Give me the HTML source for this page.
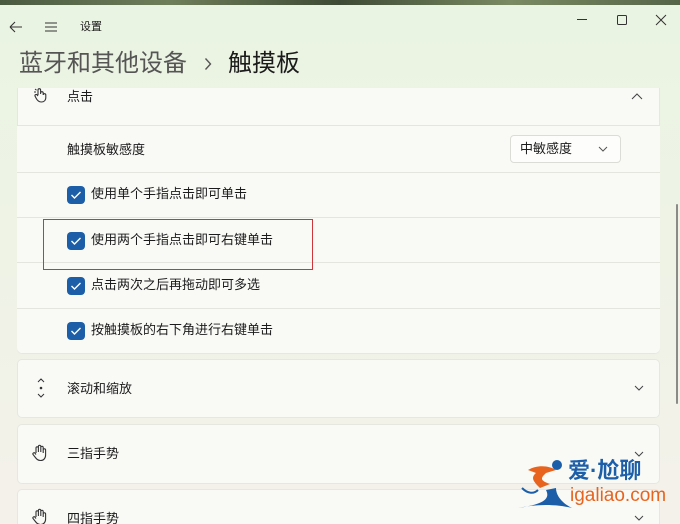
<!DOCTYPE html>
<html><head><meta charset="utf-8"><style>
*{margin:0;padding:0;box-sizing:border-box}
html,body{width:680px;height:524px;overflow:hidden}
body{position:relative;font-family:"Liberation Sans","Noto Sans CJK SC",sans-serif;background:linear-gradient(180deg,#eaf4e2 0%,#eef3e6 45%,#f4f1ea 100%);color:#1b1b1b}
.top{position:absolute;left:0;top:0;width:680px;height:5px;background:linear-gradient(90deg,#4a5a40,#6f7e5a,#3e4a35,#7a8a62,#556448)}
.abs{position:absolute}
.t{font-size:13px;white-space:nowrap;line-height:16px}
.card{position:absolute;left:17px;width:643px;background:#f9faf6;border:1px solid #e6e8e0;border-radius:5px}
.row{position:absolute;left:17px;width:643px;border-top:1px solid #e4e6de;background:#f9faf6}
.cb{position:absolute;width:18px;height:18px;border-radius:4px;background:#1c5fa8}
.cb svg{position:absolute;left:3px;top:4px}
.chev{position:absolute}
</style></head><body>
<div class="top"></div>
<svg class="abs" style="left:9px;top:21px" width="14" height="12"><path d="M1 6H13M1 6L6 1M1 6L6 11" stroke="#333" fill="none" stroke-width="1.1"/></svg>
<svg class="abs" style="left:44px;top:21px" width="14" height="12"><path d="M1 2H13M1 6H13M1 10H13" stroke="#333" stroke-width="1.1"/></svg>
<div class="abs t" style="left:80px;top:19px;font-size:11px">设置</div>
<svg class="abs" style="left:576px;top:18px" width="12" height="4"><path d="M1 1.5H11" stroke="#333"/></svg>
<svg class="abs" style="left:616px;top:14px" width="12" height="12"><rect x="1.5" y="1.5" width="9" height="9" rx="1" stroke="#333" fill="none"/></svg>
<svg class="abs" style="left:655px;top:14px" width="12" height="12"><path d="M1 1L11 11M11 1L1 11" stroke="#333"/></svg>
<div class="abs" style="left:19px;top:50px;font-size:24px;line-height:28px;color:#555;white-space:nowrap">蓝牙和其他设备</div>
<svg class="abs" style="left:204px;top:57px" width="8" height="14"><path d="M1.5 1.5L6.5 7L1.5 12.5" stroke="#555" fill="none" stroke-width="1.4"/></svg>
<div class="abs" style="left:228px;top:50px;font-size:24px;line-height:28px;color:#1b1b1b;white-space:nowrap">触摸板</div>

<div class="card" style="top:88px;height:266px;border-radius:0 0 5px 5px;border-top:none"></div>
<svg class="abs" style="left:33px;top:87px" width="16" height="16"><path d="M5 8V3a1.3 1.3 0 0 1 2.6 0V7M7.6 7V6a1.3 1.3 0 0 1 2.6 0V8M10.2 8a1.3 1.3 0 0 1 2.6 0v2.5c0 3-2 4.5-4.5 4.5S4 13 3 11L2 9a1.2 1.2 0 0 1 2-1.2L5 9" stroke="#333" fill="none" stroke-width="1.1"/><path d="M2 2L3.5 3.2M1 5H3" stroke="#333"/></svg>
<div class="abs t" style="left:67px;top:89px">点击</div>
<svg class="chev" style="left:631px;top:93px" width="12" height="8"><path d="M1 6L6 1L11 6" stroke="#444" fill="none"/></svg>

<div class="row" style="top:125px;height:47px"></div>
<div class="abs t" style="left:67px;top:142px">触摸板敏感度</div>
<div class="abs" style="left:510px;top:135px;width:111px;height:28px;background:#fdfdfb;border:1px solid #dcdcd6;border-radius:4px"></div>
<div class="abs t" style="left:520px;top:141px">中敏感度</div>
<svg class="chev" style="left:598px;top:146px" width="10" height="7"><path d="M1 1L5 5L9 1" stroke="#555" fill="none"/></svg>

<div class="row" style="top:172px;height:45px"></div>
<div class="row" style="top:217px;height:45px"></div>
<div class="row" style="top:262px;height:46px"></div>
<div class="row" style="top:308px;height:45px;border-radius:0 0 5px 5px"></div>

<div class="cb" style="left:67px;top:186px"><svg width="12" height="10"><path d="M1.5 5L4.5 8L10.5 2" stroke="#fff" fill="none" stroke-width="1.4"/></svg></div>
<div class="abs t" style="left:91px;top:186px">使用单个手指点击即可单击</div>
<div class="cb" style="left:67px;top:232px"><svg width="12" height="10"><path d="M1.5 5L4.5 8L10.5 2" stroke="#fff" fill="none" stroke-width="1.4"/></svg></div>
<div class="abs t" style="left:91px;top:232px">使用两个手指点击即可右键单击</div>
<div class="cb" style="left:67px;top:277px"><svg width="12" height="10"><path d="M1.5 5L4.5 8L10.5 2" stroke="#fff" fill="none" stroke-width="1.4"/></svg></div>
<div class="abs t" style="left:91px;top:277px">点击两次之后再拖动即可多选</div>
<div class="cb" style="left:67px;top:322px"><svg width="12" height="10"><path d="M1.5 5L4.5 8L10.5 2" stroke="#fff" fill="none" stroke-width="1.4"/></svg></div>
<div class="abs t" style="left:91px;top:322px">按触摸板的右下角进行右键单击</div>
<div class="abs" style="left:43px;top:219px;width:270px;height:51px;border:1.5px solid #d0353c"></div>

<div class="card" style="top:359px;height:59px"></div>
<svg class="abs" style="left:37px;top:378px" width="8" height="20"><path d="M1 4L4 1L7 4M1 16L4 19L7 16" stroke="#333" fill="none"/><circle cx="4" cy="10" r="1.3" fill="#333"/></svg>
<div class="abs t" style="left:67px;top:381px">滚动和缩放</div>
<svg class="chev" style="left:634px;top:385px" width="10" height="7"><path d="M1 1L5 5L9 1" stroke="#444" fill="none"/></svg>

<div class="card" style="top:424px;height:60px"></div>
<svg class="abs" style="left:31px;top:444px" width="18" height="18"><path d="M5 9V4a1.2 1.2 0 0 1 2.4 0V8M7.4 8V2.5a1.2 1.2 0 0 1 2.4 0V8M9.8 8V3.5a1.2 1.2 0 0 1 2.4 0V9M12.2 9V6a1.2 1.2 0 0 1 2.4 0v5c0 3.5-2.2 5.5-5 5.5S5.5 15 4 13L2 10.5a1.2 1.2 0 0 1 2-1.3L5 10.5" stroke="#333" fill="none" stroke-width="1.1"/></svg>
<div class="abs t" style="left:67px;top:446px">三指手势</div>
<svg class="chev" style="left:634px;top:451px" width="10" height="7"><path d="M1 1L5 5L9 1" stroke="#444" fill="none"/></svg>

<div class="card" style="top:489px;height:50px"></div>
<svg class="abs" style="left:31px;top:508px" width="18" height="18"><path d="M5 9V4a1.2 1.2 0 0 1 2.4 0V8M7.4 8V2.5a1.2 1.2 0 0 1 2.4 0V8M9.8 8V3.5a1.2 1.2 0 0 1 2.4 0V9M12.2 9V6a1.2 1.2 0 0 1 2.4 0v5c0 3.5-2.2 5.5-5 5.5S5.5 15 4 13L2 10.5a1.2 1.2 0 0 1 2-1.3L5 10.5" stroke="#333" fill="none" stroke-width="1.1"/></svg>
<div class="abs t" style="left:67px;top:511px">四指手势</div>
<svg class="chev" style="left:634px;top:515px" width="10" height="7"><path d="M1 1L5 5L9 1" stroke="#444" fill="none"/></svg>

<div class="abs" style="left:676px;top:204px;width:2px;height:200px;background:#8a8a86;border-radius:1px"></div>

<svg class="abs" style="left:516px;top:458px" width="56" height="56"><path d="M12 12C22 6 34 8 40 12L30 15C26 19 22 22 34 26L24 30C18 24 14 20 20 15Z" fill="#e8641e"/><circle cx="41" cy="7" r="5" fill="#1c5fa8"/><path d="M2 50C20 46 40 46 56 50C44 44 40 36 40 30L30 32C34 40 30 46 2 50Z" fill="#1c5fa8"/><path d="M6 30C12 36 18 36 22 32" stroke="#1c5fa8" stroke-width="2" fill="none"/></svg>
<div class="abs" style="left:568px;top:459px;font-size:22px;line-height:24px;font-weight:bold;color:#1c5fa8;white-space:nowrap">爱·尬聊</div>
<div class="abs" style="left:570px;top:485px;font-size:19px;line-height:22px;color:#e8641e;white-space:nowrap">igaliao.com</div>
</body></html>
